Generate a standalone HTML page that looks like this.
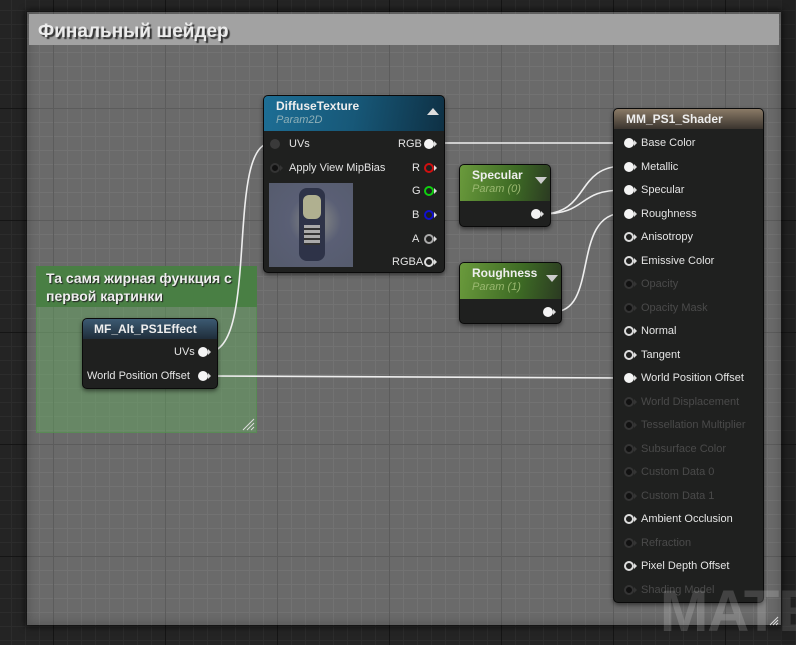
<!DOCTYPE html>
<html><head><meta charset="utf-8"><style>
*{margin:0;padding:0;box-sizing:border-box}
body{width:796px;height:644px;overflow:hidden;position:relative;font-family:"Liberation Sans","DejaVu Sans",sans-serif;
background-color:#242424;
background-image:linear-gradient(#151515 1px,transparent 1px),linear-gradient(90deg,#151515 1px,transparent 1px),linear-gradient(#2c2c2c 1px,transparent 1px),linear-gradient(90deg,#2c2c2c 1px,transparent 1px);
background-size:112px 112px,112px 112px,14px 14px,14px 14px;background-position:53px -4px,53px -4px,53px -4px,53px -4px}
.abs{position:absolute}
#cm{left:27px;top:12px;width:754px;height:613px;background-color:#6a6a6a;
background-image:linear-gradient(#5c5c5c 1px,transparent 1px),linear-gradient(90deg,#5c5c5c 1px,transparent 1px),linear-gradient(#727272 1px,transparent 1px),linear-gradient(90deg,#727272 1px,transparent 1px);
background-size:112px 112px,112px 112px,14px 14px,14px 14px;background-position:26px -16px,26px -16px,26px -16px,26px -16px;
box-shadow:0 0 6px 2px rgba(0,0,0,.6), inset 0 0 12px rgba(0,0,0,.25)}
#ct{left:29px;top:14px;width:750px;height:31px;background:#a2a2a2;color:#ececec;font-weight:bold;font-size:19px;padding:7px 0 0 9px;text-shadow:2px 2px 1px #333}
#gc{left:36px;top:266px;width:221px;height:167px;background:rgba(100,170,95,.45);border:1px solid rgba(80,140,75,.6)}
#gh{left:36px;top:266px;width:221px;height:41px;background:#497f44;color:#eee;font-weight:bold;font-size:14px;line-height:18px;padding:3px 0 0 10px;text-shadow:1px 1px 1px #222}
.node{position:absolute;background:#1f201f;border:1px solid #0a0a0a;border-radius:5px;box-shadow:0 2px 4px rgba(0,0,0,.5);color:#ddd;font-size:11px}
.hd{border-radius:4px 4px 0 0;color:#eee;font-weight:bold;font-size:12px;padding:3px 0 0 12px}
.sub{font-style:italic;font-weight:normal;font-size:11px;color:#8fb0b8;margin-top:1px}
.row{position:absolute;font-size:11px;color:#e4e4e4;white-space:nowrap}
.dim{color:#4a4a4a}
.pin{position:absolute;width:10px;height:10px;border-radius:50%;}
.pf{background:#f4f4f4}
.ph{border:2px solid #ddd}
.pd{border:2px solid #343434;background:#111}
.pin:after{content:"";position:absolute;right:-3px;top:2px;border-left:3px solid #ddd;border-top:3px solid transparent;border-bottom:3px solid transparent}
.ph:after,.pd:after,.pc:after{right:-5px;top:0}
.pd:after{border-left-color:#343434}
.pn:after{display:none}
</style></head><body>
<div id="cm" class="abs"></div>
<div id="ct" class="abs">Финальный шейдер</div>
<div id="gc" class="abs"></div>
<div id="gh" class="abs">Та самя жирная функция с первой картинки</div>

<svg class="abs" style="left:0;top:0" width="796" height="644">
<g fill="none" stroke="#eee" stroke-width="1.6">
<path d="M436 143 L624 143"/>
<path d="M541 214 C590 214,575 166,624 166"/>
<path d="M541 214 C590 214,575 190,624 190"/>
<path d="M553 312 C600 312,570 213,624 213"/>
<path d="M208 352 C260 352,225 143,271 143"/>
<path d="M208 376 L624 378"/>
</g>
<g stroke="#ddd" stroke-width="1"><path d="M770 625 L778 617 M773 625 L778 620 M776 625 L778 623"/><path d="M243 430 L254 419 M247 430 L254 423 M251 430 L254 427"/></g>
</svg>

<!-- MF node -->
<div class="node" style="left:82px;top:318px;width:136px;height:71px">
<div class="hd" style="height:20px;background:linear-gradient(#3c5a72,#1f2d3a);padding-left:11px">MF_Alt_PS1Effect</div>
</div>
<div class="row" style="left:174px;top:346px">UVs</div>
<div class="pin pf" style="left:198px;top:347px"></div>
<div class="row" style="left:87px;top:370px">World Position Offset</div>
<div class="pin pf" style="left:198px;top:371px"></div>

<!-- DiffuseTexture -->
<div class="node" style="left:263px;top:95px;width:182px;height:178px">
<div class="hd" style="height:35px;background:linear-gradient(100deg,#1d6e95,#175878 50%,#0e3044);">DiffuseTexture<div class="sub">Param2D</div></div>
</div>
<div class="abs" style="left:427px;top:108px;border-bottom:7px solid #ddd;border-left:6px solid transparent;border-right:6px solid transparent"></div>
<div class="pin pd pn" style="left:270px;top:139px;background:#3a3a3a;border-color:#3a3a3a"></div>
<div class="row" style="left:289px;top:138px">UVs</div>
<div class="pin pd" style="left:270px;top:163px"></div>
<div class="row" style="left:289px;top:162px">Apply View MipBias</div>
<div class="abs" style="left:269px;top:183px;width:84px;height:84px;background:radial-gradient(ellipse at 55% 45%,#8d8f88 0,#5a5f75 40%,#555b6c 100%)">
<div class="abs" style="left:30px;top:5px;width:26px;height:73px;background:#2e3348;border-radius:8px"></div>
<div class="abs" style="left:34px;top:12px;width:18px;height:24px;background:#b0b090;border-radius:6px"></div>
<div class="abs" style="left:35px;top:42px;width:16px;height:20px;background:repeating-linear-gradient(#aaa 0 3px,#333 3px 5px)"></div>
</div>
<div class="row" style="left:398px;top:138px">RGB</div><div class="pin pf" style="left:424px;top:139px"></div>
<div class="row" style="left:412px;top:162px">R</div><div class="pin pc" style="left:424px;top:163px;border:2px solid #d01010"></div>
<div class="row" style="left:412px;top:185px">G</div><div class="pin pc" style="left:424px;top:186px;border:2px solid #10d010"></div>
<div class="row" style="left:412px;top:209px">B</div><div class="pin pc" style="left:424px;top:210px;border:2px solid #1010d0"></div>
<div class="row" style="left:412px;top:233px">A</div><div class="pin ph" style="left:424px;top:234px;border-color:#aaa"></div>
<div class="row" style="left:392px;top:256px">RGBA</div><div class="pin ph" style="left:424px;top:257px"></div>

<!-- Specular -->
<div class="node" style="left:459px;top:164px;width:92px;height:63px">
<div class="hd" style="height:36px;background:linear-gradient(100deg,#6a9a3c,#3d6a24 60%,#2b3a22);">Specular<div class="sub" style="color:#9ab870">Param (0)</div></div>
</div>
<div class="abs" style="left:535px;top:177px;border-top:7px solid #ccc;border-left:6px solid transparent;border-right:6px solid transparent"></div>
<div class="pin pf" style="left:531px;top:209px"></div>

<!-- Roughness -->
<div class="node" style="left:459px;top:262px;width:103px;height:62px">
<div class="hd" style="height:36px;background:linear-gradient(100deg,#6a9a3c,#3d6a24 60%,#2b3a22);">Roughness<div class="sub" style="color:#9ab870">Param (1)</div></div>
</div>
<div class="abs" style="left:546px;top:275px;border-top:7px solid #ccc;border-left:6px solid transparent;border-right:6px solid transparent"></div>
<div class="pin pf" style="left:543px;top:307px"></div>

<!-- MM_PS1_Shader -->
<div class="node" style="left:613px;top:108px;width:151px;height:495px">
<div class="hd" style="height:20px;background:linear-gradient(#8a7a66,#3a342e);">MM_PS1_Shader</div>
</div>
<div id="mm"></div>
<div class="abs" style="left:660px;top:578px;font-size:58px;font-weight:bold;color:rgba(255,255,255,.16);letter-spacing:-1px">MATERIAL</div>
<div class="abs" style="left:781px;top:0;width:15px;height:644px;background:rgba(20,20,20,.25)"></div>
<script>
var rows=[["Base Color","f"],["Metallic","f"],["Specular","f"],["Roughness","f"],["Anisotropy","h"],["Emissive Color","h"],["Opacity","d"],["Opacity Mask","d"],["Normal","h"],["Tangent","h"],["World Position Offset","f"],["World Displacement","d"],["Tessellation Multiplier","d"],["Subsurface Color","d"],["Custom Data 0","d"],["Custom Data 1","d"],["Ambient Occlusion","h"],["Refraction","d"],["Pixel Depth Offset","h"],["Shading Model","d"]];
var h="";
rows.forEach(function(r,i){var y=Math.round(143+i*23.5);
h+='<div class="pin p'+r[1]+'" style="left:624px;top:'+(y-5)+'px"></div><div class="row'+(r[1]=="d"?" dim":"")+'" style="left:641px;top:'+(y-6)+'px">'+r[0]+'</div>';});
document.getElementById("mm").innerHTML=h;
</script>
</body></html>
